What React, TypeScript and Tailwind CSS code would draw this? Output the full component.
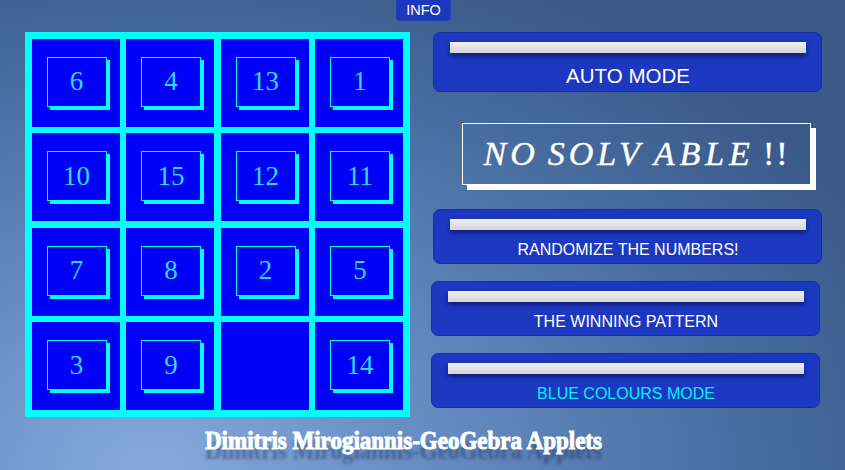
import React from "react";

const tiles: (number | null)[] = [6, 4, 13, 1, 10, 15, 12, 11, 7, 8, 2, 5, 3, 9, null, 14];

function Tile({ n }: { n: number | null }) {
  return (
    <div className="w-[88px] h-[88px] bg-[#0000f6] pl-[15px] pt-[18px]">
      {n !== null && (
        <div className="w-[60px] h-[50px] border border-[#00ffff] shadow-[3px_3px_0_#00ffff] flex items-center justify-center">
          <span className="text-[27px] leading-[27px] text-[#2ed8ff] [font-family:'Liberation_Serif',serif]">{n}</span>
        </div>
      )}
    </div>
  );
}

function Bar() {
  return (
    <div className="h-[11px] w-full bg-gradient-to-b from-[#f0f0f0] to-[#d3d6d6] shadow-[0_3px_4px_rgba(8,16,90,0.65)]" />
  );
}

function Btn({ label, boxCls, textCls }: { label: string; boxCls: string; textCls: string }) {
  return (
    <div className={boxCls}>
      <Bar />
      <div className={textCls}>{label}</div>
    </div>
  );
}

export default function App() {
  return (
    <div className="relative w-[845px] h-[470px] overflow-hidden bg-[radial-gradient(ellipse_95%_115%_at_18%_100%,#88aadb_0%,#6a90c6_30%,#5479ad_58%,#44689a_80%,#3a5a8a_100%)] [font-family:'Liberation_Sans',Arial,sans-serif]">
      {/* top bar with INFO */}
      <div className="h-[32px] flex">
        <div className="ml-[396px] w-[55px] h-[21px] bg-[#1c37c0] rounded-b-[4px] border-x border-b border-[#2242b0] flex items-center justify-center text-white text-[14.5px] leading-none">
          INFO
        </div>
      </div>

      <div className="flex items-start">
        {/* puzzle grid */}
        <div className="ml-[25px] grid grid-cols-[repeat(4,88px)] grid-rows-[repeat(4,88px)] gap-[6.5px] p-[6.5px] bg-[#00ffff]">
          {tiles.map((n, i) => (
            <Tile key={i} n={n} />
          ))}
        </div>

        {/* right column */}
        <div className="ml-[21.5px] w-[391px] flex flex-col">
          <Btn
            label="AUTO MODE"
            boxCls="ml-[2px] w-[389px] h-[60px] bg-[#1c37c0] border border-[#1a2f9e] rounded-[7px] pt-[9px] pl-[16px] pr-[15px] flex flex-col"
            textCls="mt-[13px] text-center text-white text-[20.5px] leading-[20px]"
          />

          <div className="mt-[31px] ml-[31px] w-[349px] h-[62px] border border-white shadow-[5px_5px_0_#ffffff] flex items-center justify-center text-white [font-family:'Liberation_Serif',serif] text-[34px] leading-none [-webkit-text-stroke:0.4px_white]">
            <span className="italic tracking-[4px]">NO</span>
            <span className="italic tracking-[4px] ml-[9px]">SOLV</span>
            <span className="italic tracking-[5px] ml-[10px]">ABLE</span>
            <span className="ml-[8px] tracking-[2px]">!!</span>
          </div>

          <Btn
            label="RANDOMIZE THE NUMBERS!"
            boxCls="mt-[24px] ml-[2px] w-[389px] h-[55px] bg-[#1c37c0] border border-[#1a2f9e] rounded-[7px] pt-[9px] pl-[16px] pr-[15px] flex flex-col"
            textCls="mt-[12px] text-center text-white text-[16px] leading-[16px]"
          />
          <Btn
            label="THE WINNING PATTERN"
            boxCls="mt-[17px] w-[389px] h-[55px] bg-[#1c37c0] border border-[#1a2f9e] rounded-[7px] pt-[9px] pl-[16px] pr-[15px] flex flex-col"
            textCls="mt-[12px] text-center text-white text-[16px] leading-[16px]"
          />
          <Btn
            label="BLUE COLOURS MODE"
            boxCls="mt-[17px] w-[389px] h-[55px] bg-[#1c37c0] border border-[#1a2f9e] rounded-[7px] pt-[9px] pl-[16px] pr-[15px] flex flex-col"
            textCls="mt-[12px] text-center text-[#00f0ff] text-[16px] leading-[16px]"
          />
        </div>
      </div>

      {/* footer */}
      <div className="mt-[12px] ml-[205px] w-[402px] text-white font-bold text-[23px] leading-[23px] whitespace-nowrap [font-family:'Liberation_Serif',serif] origin-top scale-y-[1.06] [-webkit-text-stroke:0.9px_white] [text-shadow:0_9px_3px_rgba(30,50,95,0.5)]">
        Dimitris Mirogiannis-GeoGebra Applets
      </div>
    </div>
  );
}
